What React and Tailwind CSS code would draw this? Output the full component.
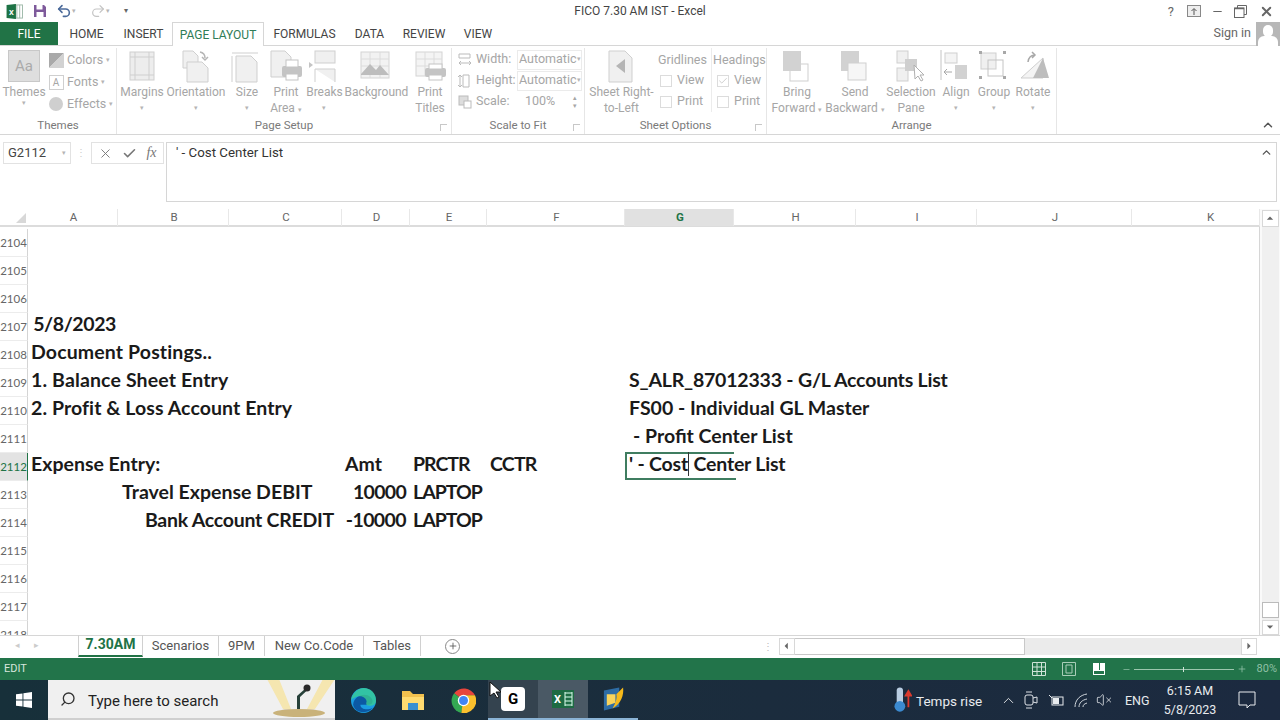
import { ChevronUp, Search, VolumeX, Plus, Minus, X, Check, Undo2, Redo2 } from 'lucide-react'

const GRID = 'grid grid-cols-[28px_90px_111px_113px_68px_77px_138px_109px_122px_121px_155px_128px]'
const COLS = ['A', 'B', 'C', 'D', 'E', 'F', 'G', 'H', 'I', 'J', 'K']

const rows = [
  { n: 2104 }, { n: 2105 }, { n: 2106 },
  { n: 2107, cells: { A: ['5/8/2023', 'end', 'pr-[2px] tracking-[-0.4px]'] } },
  { n: 2108, cells: { A: ['Document Postings..', 'start', 'pl-[3px] tracking-[0.13px]'] } },
  { n: 2109, cells: { A: ['1. Balance Sheet Entry', 'start', 'pl-[3px] tracking-[0.14px]'], G: ['S_ALR_87012333 - G/L Accounts List', 'start', 'pl-[4px] tracking-[-0.2px]'] } },
  { n: 2110, cells: { A: ['2. Profit & Loss Account Entry', 'start', 'pl-[3px] tracking-[0.08px]'], G: ['FS00 - Individual GL Master', 'start', 'pl-[4px]'] } },
  { n: 2111, cells: { G: ['- Profit Center List', 'start', 'pl-[8px]'] } },
  { n: 2112, active: true, cells: { A: ['Expense Entry:', 'start', 'pl-[3px]'], D: ['Amt', 'start', 'pl-[3px]'], E: ['PRCTR', 'start', 'pl-[3px] tracking-[-1px]'], F: ['CCTR', 'start', 'pl-[3px] tracking-[-0.8px]'] } },
  { n: 2113, cells: { B: ['Travel Expense DEBIT', 'start', 'pl-[4px]'], D: ['10000', 'end', 'pr-[4px] tracking-[-0.7px]'], E: ['LAPTOP', 'start', 'pl-[3px] tracking-[-1px]'] } },
  { n: 2114, cells: { C: ['Bank Account CREDIT', 'end', 'pr-[8px] tracking-[-0.25px]'], D: ['-10000', 'end', 'pr-[4px] tracking-[-0.6px]'], E: ['LAPTOP', 'start', 'pl-[3px] tracking-[-1px]'] } },
  { n: 2115 }, { n: 2116 }, { n: 2117 }, { n: 2118 },
]

const Caret = () => <span className="text-[7px] leading-none text-[#b5b5b5]">▾</span>

const ribbonIcons = {
  margins: <><rect x="4" y="2" width="24" height="28" fill="#ededed" stroke="#cfcfcf" /><path d="M4 7h24M4 25h24M9 2v28M23 2v28" stroke="#cfcfcf" /></>,
  orientation: <><path d="M3 1h10l5 5v12H3z" fill="#f0f0f0" stroke="#cfcfcf" /><path d="M7 12h15l6 6v14H7z" fill="#f0f0f0" stroke="#cfcfcf" /><path d="M20 2q5 1 5 6m-3-1 3 3 3-3" fill="none" stroke="#b5b5b5" strokeWidth="1.5" /></>,
  size: <><path d="M1 3h26M1 6v26M5 6h15l6 6v20H5z" fill="#f0f0f0" stroke="#cfcfcf" /></>,
  print: <><path d="M1 1h14l6 6v20H1z" fill="#f0f0f0" stroke="#cfcfcf" /><rect x="12" y="16" width="20" height="11" rx="2" fill="#c4c4c4" /><rect x="16" y="10" width="12" height="7" fill="#fff" stroke="#c4c4c4" /><rect x="16" y="24" width="12" height="6" fill="#fff" stroke="#c4c4c4" /></>,
  breaks: <><rect x="7" y="1" width="20" height="12" fill="#f0f0f0" stroke="#cfcfcf" /><path d="M7 19h20v13M7 19v13" fill="#f0f0f0" stroke="#cfcfcf" /><path d="m1 12 4 3-4 3z" fill="#c4c4c4" /></>,
  background: <><rect x="1" y="2" width="28" height="26" fill="#f2f2f2" stroke="#d4d4d4" /><path d="M1 9h28M1 16h28M10 2v26M20 2v26" stroke="#dcdcdc" /><path d="m1 24 9-10 6 6 4-5 9 10H1z" fill="#bdbdbd" /></>,
  titles: <><rect x="2" y="2" width="26" height="24" fill="#f4f4f4" stroke="#d4d4d4" /><path d="M2 9h26M2 16h26M11 2v24M20 2v24" stroke="#dcdcdc" /><rect x="11" y="18" width="21" height="9" rx="2" fill="#c4c4c4" /><rect x="15" y="14" width="13" height="5" fill="#fff" stroke="#c4c4c4" /><rect x="15" y="25" width="13" height="5" fill="#fff" stroke="#c4c4c4" /></>,
  rtl: <><path d="M4 1h16l7 7v24H4z" fill="#f0f0f0" stroke="#cfcfcf" /><path d="m20 9v14l-9-7z" fill="#b5b5b5" /></>,
  forward: <><rect x="9" y="14" width="18" height="17" fill="#fff" stroke="#cfcfcf" /><rect x="2" y="1" width="18" height="20" fill="#d2d2d2" /></>,
  backward: <><rect x="2" y="1" width="18" height="20" fill="#d2d2d2" /><rect x="9" y="13" width="18" height="17" fill="#f6f6f6" stroke="#cfcfcf" /></>,
  selection: <><rect x="2" y="1" width="11" height="12" fill="#f0f0f0" stroke="#cfcfcf" /><rect x="2" y="18" width="11" height="13" fill="#f0f0f0" stroke="#cfcfcf" /><rect x="10" y="9" width="12" height="12" fill="#cfcfcf" /><path d="m19 15 1 14 3-3 3 5 2-1-3-5h4z" fill="#fff" stroke="#b0b0b0" /></>,
  align: <><path d="M1 0v30" stroke="#c4c4c4" /><rect x="5" y="3" width="12" height="10" fill="#f4f4f4" stroke="#cfcfcf" /><rect x="15" y="15" width="12" height="14" fill="#d2d2d2" /><path d="M12 22H4m3-3-3 3 3 3" stroke="#a8a8a8" fill="none" /></>,
  group: <><rect x="3" y="3" width="15" height="16" fill="#f0f0f0" stroke="#cfcfcf" /><rect x="10" y="10" width="15" height="16" fill="none" stroke="#c4c4c4" /><path d="M1 1h3v3H1zM25 1h3v3h-3zM1 26h3v3H1zM25 26h3v3h-3z" fill="#a8a8a8" /></>,
  rotate: <><path d="M26 8v20H4z" fill="#f4f4f4" stroke="#cfcfcf" /><path d="M16 28 26 8l6 20z" fill="#bdbdbd" /><path d="M11 12q1-7 7-7m-3-3 3 3-3 3" fill="none" stroke="#a8a8a8" strokeWidth="1.5" /></>,
}

function RibbonBtn({ w, icon, lines, caret, caretInline }) {
  return (
    <div className={`${w} flex flex-col items-center shrink-0`}>
      <svg viewBox="0 0 33 33" className="w-[33px] h-[33px] mt-[2px] mb-[1px] shrink-0">{ribbonIcons[icon]}</svg>
      <div className="text-center text-[12px] leading-[16px] text-[#a6a6a6] whitespace-nowrap">
        {lines.map((l, i) => (
          <div key={l}>{l}{caretInline && i === lines.length - 1 ? <> <Caret /></> : null}</div>
        ))}
        {caret && <div className="h-[12px] leading-[12px]"><Caret /></div>}
      </div>
    </div>
  )
}

function Group({ label, w, launcher, children }) {
  return (
    <div className={`${w} h-[86px] shrink-0 flex flex-col border-r border-[#e6e6e6] relative`}>
      <div className="flex-1 flex min-h-0">{children}</div>
      <div className="h-[18px] text-center text-[11.5px] leading-[18px] text-[#7a7a7a]">{label}</div>
      {launcher && <span className="absolute right-[4px] bottom-[3px] w-[7px] h-[7px] border-l border-t border-[#c8c8c8]" />}
    </div>
  )
}

function ThemeRow({ swatch, label }) {
  return (
    <div className="h-[22px] flex items-center gap-[3px] text-[12.5px] text-[#a6a6a6]">
      <span className="w-[16px] h-[16px] flex items-center justify-center text-[10px]">{swatch}</span>
      {label} <Caret />
    </div>
  )
}

function ScaleRow({ icon, label, value, spin }) {
  return (
    <div className="h-[21px] flex items-center text-[12.5px] text-[#a6a6a6]">
      <svg viewBox="0 0 14 14" className="w-[14px] h-[14px] mr-[4px] shrink-0">{icon}</svg>
      <span className="w-[41px]">{label}</span>
      <span className={`w-[65px] h-[20px] flex items-center justify-between px-[1px] overflow-hidden ${spin ? 'pl-[8px]' : 'border border-[#ebebeb]'}`}>
        {value} {spin ? <span className="text-[7px] leading-[8px] flex flex-col pr-[4px]"><span>▴</span><span>▾</span></span> : <Caret />}
      </span>
    </div>
  )
}

function Box({ checked, label }) {
  return (
    <div className="h-[21px] flex items-center gap-[5px] text-[12.5px] text-[#a6a6a6]">
      <span className="w-[12px] h-[12px] border border-[#dcdcdc] flex items-center justify-center">
        {checked && <Check size={10} strokeWidth={1.5} className="text-[#b0b0b0]" />}
      </span>
      {label}
    </div>
  )
}

function Cell({ spec }) {
  if (!spec) return <div />
  const [text, align, pad] = spec
  return (
    <div className={`flex min-w-0 items-center pb-[6px] whitespace-nowrap ${align === 'end' ? 'justify-end' : 'justify-start'} ${pad}`}>
      <span>{text}</span>
    </div>
  )
}

function EditCell() {
  return (
    <div className="flex min-w-0 items-center h-[28px] -mt-px pb-[4px] pl-[2px] tracking-[-0.2px] whitespace-nowrap border-l-2 border-y-2 border-[#3f7d60] relative">
      <span className="border-r border-[#333]">' - Cost</span>
      <span>&nbsp;Center List</span>
      <span className="absolute -right-[2px] -bottom-[2px] w-[3px] h-[2px] bg-[#3f7d60]" />
    </div>
  )
}

function SheetRow({ row }) {
  const cells = row.cells || {}
  return (
    <div className={`${GRID} grid-rows-[28px] h-[28px] leading-[24px]`}>
      <div className={`flex items-center justify-center text-[11.5px] font-normal border-b border-[#ececec] border-r ${row.active ? 'bg-[#e3e3e3] text-[#217346] font-bold border-r-[#217346]' : 'text-[#666] border-r-[#d4d4d4]'}`}>
        {row.n}
      </div>
      {COLS.map(c => (row.active && c === 'G' ? <EditCell key={c} /> : <Cell key={c} spec={cells[c]} />))}
    </div>
  )
}

function ArrowBtn({ dir, className = '' }) {
  const d = { up: 'M1 6l4-4 4 4z', down: 'M1 2l4 4 4-4z', left: 'M6 1 2 5l4 4z', right: 'M3 1l4 4-4 4z' }[dir]
  return (
    <div className={`flex items-center justify-center bg-white border border-[#d8d8d8] ${className}`}>
      <svg viewBox="0 0 10 10" className="w-[8px] h-[8px]"><path d={d} fill="#666" /></svg>
    </div>
  )
}

function TaskSlot({ children, className = '' }) {
  return <div className={`w-[50px] h-[40px] flex items-center justify-center shrink-0 ${className}`}>{children}</div>
}

export default function App() {
  return (
    <div className="w-[1280px] h-[720px] overflow-hidden bg-white flex flex-col font-['Roboto',sans-serif] text-[#444]">
      {/* title bar */}
      <div className="h-[22px] shrink-0 grid grid-cols-[1fr_auto_1fr] items-center">
        <div className="flex items-center pl-[6px]">
          <svg viewBox="0 0 18 16" className="w-[18px] h-[15px]">
            <rect x="8" y="1" width="9" height="14" fill="#fff" stroke="#9db8a8" />
            <path d="M11 1v14M14 1v14" stroke="#9db8a8" />
            <path d="M0 1 10 0v16L0 15z" fill="#1d7245" />
            <text x="2.5" y="11.5" fontSize="8" fontWeight="700" fill="#fff">X</text>
          </svg>
          <svg viewBox="0 0 14 14" className="w-[14px] h-[14px] ml-[9px]">
            <path d="M1 1h10l2 2v10H1z" fill="#7e5a9b" />
            <rect x="3.5" y="1" width="6" height="4.5" fill="#fff" />
            <rect x="3.5" y="8" width="7" height="5" fill="#fff" />
          </svg>
          <Undo2 size={16} strokeWidth={2.4} className="ml-[9px] text-[#4b6a9a]" />
          <Caret />
          <Redo2 size={16} strokeWidth={1.8} className="ml-[14px] text-[#c4c4c4]" />
          <Caret />
          <span className="ml-[14px] text-[8px] leading-none text-[#666]">▾</span>
        </div>
        <div className="text-[12px] text-[#444]">FICO 7.30 AM IST - Excel</div>
        <div className="flex items-center justify-end pr-[6px] text-[#666]">
          <span className="text-[13px] leading-none mr-[13px]">?</span>
          <svg viewBox="0 0 14 12" className="w-[14px] h-[12px] mr-[10px]">
            <rect x=".5" y=".5" width="13" height="11" fill="#eee" stroke="#888" />
            <path d="M7 10V4M4.5 6 7 3.5 9.500 6" stroke="#555" fill="none" />
          </svg>
          <Minus size={13} strokeWidth={2} className="mr-[10px]" />
          <svg viewBox="0 0 13 13" className="w-[13px] h-[13px] mr-[12px]">
            <path d="M3.500 3V.5h9v9H10" fill="none" stroke="#666" />
            <rect x=".5" y="3" width="9.500" height="9.500" fill="#fff" stroke="#666" />
            <path d="M.5 3.500H10" stroke="#666" strokeWidth="1.500" />
          </svg>
          <X size={15} strokeWidth={3} />
        </div>
      </div>

      {/* ribbon tabs */}
      <div className="h-[24px] shrink-0 flex items-stretch text-[12px] border-b border-[#d6d6d6] relative">
        <div className="w-[58px] bg-[#217346] text-white flex items-center justify-center">FILE</div>
        <div className="w-[57px] flex items-center justify-center">HOME</div>
        <div className="w-[57px] flex items-center justify-center">INSERT</div>
        <div className="w-[92px] h-[24px] flex items-center justify-center text-[#2f7c57] bg-white border border-b-0 border-[#d6d6d6]">PAGE LAYOUT</div>
        <div className="w-[81px] flex items-center justify-center">FORMULAS</div>
        <div className="w-[49px] flex items-center justify-center">DATA</div>
        <div className="w-[60px] flex items-center justify-center">REVIEW</div>
        <div className="w-[48px] flex items-center justify-center">VIEW</div>
        <div className="ml-auto flex items-center gap-[5px] text-[12.5px] text-[#666]">
          Sign in
          <div className="w-[24px] h-[24px] bg-[#b7b7b7] flex flex-col items-center overflow-hidden">
            <span className="w-[10px] h-[12px] mt-[3px] shrink-0 rounded-full bg-white" />
            <span className="w-[20px] h-[12px] -mt-[1px] shrink-0 rounded-t-[6px] bg-white" />
          </div>
        </div>
      </div>

      {/* ribbon */}
      <div className="h-[89px] shrink-0 flex pt-[2px] border-b border-[#d6d6d6]">
        <Group label="Themes" w="w-[117px]">
          <div className="w-[48px] flex flex-col items-center">
            <div className="w-[32px] h-[32px] mt-[2px] mb-[2px] shrink-0 bg-[#dedede] border border-[#c8c8c8] flex items-center justify-center text-[15px] text-[#aaa]">Aa</div>
            <div className="text-[12px] leading-[16px] text-[#a6a6a6]">Themes</div>
            <Caret />
          </div>
          <div className="flex flex-col pt-[1px]">
            <ThemeRow label="Colors" swatch={<span className="w-[15px] h-[15px] bg-[linear-gradient(135deg,#a9a9a9_50%,#d2d2d2_50%)]" />} />
            <ThemeRow label="Fonts" swatch={<span className="w-[15px] h-[15px] border border-[#cfcfcf] flex items-center justify-center">A</span>} />
            <ThemeRow label="Effects" swatch={<span className="w-[14px] h-[14px] rounded-full bg-[#cfcfcf]" />} />
          </div>
        </Group>
        <Group label="Page Setup" w="w-[335px]" launcher>
          <div className="w-[3px]" />
          <RibbonBtn w="w-[46px]" icon="margins" lines={['Margins']} caret />
          <RibbonBtn w="w-[62px]" icon="orientation" lines={['Orientation']} caret />
          <RibbonBtn w="w-[40px]" icon="size" lines={['Size']} caret />
          <RibbonBtn w="w-[38px]" icon="print" lines={['Print', 'Area']} caretInline />
          <RibbonBtn w="w-[39px]" icon="breaks" lines={['Breaks']} caret />
          <RibbonBtn w="w-[65px]" icon="background" lines={['Background']} />
          <RibbonBtn w="w-[42px]" icon="titles" lines={['Print', 'Titles']} />
        </Group>
        <Group label="Scale to Fit" w="w-[133px]" launcher>
          <div className="flex flex-col pl-[6px] pt-[1px]">
            <ScaleRow label="Width:" value="Automatic" icon={<path d="M1 1h11v4H1zM1 10h12M3 8l-2 2 2 2M11 8l2 2-2 2" fill="none" stroke="#bbb" />} />
            <ScaleRow label="Height:" value="Automatic" icon={<path d="M5 1h6v12H5zM2 1v12M0 3l2-2 2 2M0 11l2 2 2-2" fill="none" stroke="#bbb" />} />
            <ScaleRow label="Scale:" value="100%" spin icon={<><rect x="1" y="1" width="9" height="9" fill="#ddd" stroke="#bbb" /><rect x="6" y="6" width="7" height="7" fill="#fff" stroke="#bbb" /></>} />
          </div>
        </Group>
        <Group label="Sheet Options" w="w-[182px]" launcher>
          <RibbonBtn w="w-[73px]" icon="rtl" lines={['Sheet Right-', 'to-Left']} />
          <div className="w-[53px] flex flex-col pt-[3px] text-[12.5px] text-[#a6a6a6]">
            <div className="h-[19px]">Gridlines</div>
            <div className="pl-[2px]"><Box label="View" /><Box label="Print" /></div>
          </div>
          <div className="w-[55px] h-[64px] flex flex-col pt-[3px] text-[12.5px] text-[#a6a6a6] border-l border-[#ececec]">
            <div className="h-[19px] pl-[1px]">Headings</div>
            <div className="pl-[5px]"><Box checked label="View" /><Box label="Print" /></div>
          </div>
        </Group>
        <Group label="Arrange" w="w-[290px]">
          <div className="w-[1px]" />
          <RibbonBtn w="w-[58px]" icon="forward" lines={['Bring', 'Forward']} caretInline />
          <RibbonBtn w="w-[58px]" icon="backward" lines={['Send', 'Backward']} caretInline />
          <RibbonBtn w="w-[54px]" icon="selection" lines={['Selection', 'Pane']} />
          <RibbonBtn w="w-[36px]" icon="align" lines={['Align']} caret />
          <RibbonBtn w="w-[40px]" icon="group" lines={['Group']} caret />
          <RibbonBtn w="w-[38px]" icon="rotate" lines={['Rotate']} caret />
        </Group>
        <div className="flex-1 flex items-end justify-end pr-[5px] pb-[2px]">
          <ChevronUp size={14} strokeWidth={2.5} className="text-[#555]" />
        </div>
      </div>

      {/* formula bar */}
      <div className="h-[74px] shrink-0 flex items-start pt-[7px] pl-[3px] pr-[3px]">
        <div className="w-[68px] h-[22px] border border-[#e2e2e2] flex items-center justify-between px-[4px] text-[13px]">
          G2112 <Caret />
        </div>
        <div className="w-[20px] text-center text-[#ccc] text-[10px] leading-[22px]">⋮</div>
        <div className="w-[73px] h-[22px] border border-[#e2e2e2] flex items-center justify-around px-[2px] text-[#777]">
          <X size={15} strokeWidth={1.5} />
          <Check size={15} strokeWidth={2.5} />
          <span className="font-['Liberation_Serif',serif] italic text-[14px] leading-none">fx</span>
        </div>
        <div className="w-[2px] shrink-0" />
        <div className="flex-1 h-[60px] border border-[#d6d6d6] flex justify-between pl-[9px] pr-[3px] text-[13.3px] text-[#333]">
          <span>' - Cost Center List</span>
          <ChevronUp size={13} strokeWidth={2.5} className="text-[#555] mt-[3px]" />
        </div>
      </div>

      {/* sheet */}
      <div className="flex-1 min-h-0 flex">
        <div className="w-[1260px] flex flex-col">
          <div className={`${GRID} h-[18px] shrink-0 text-[11.5px] text-[#666] border-b-2 border-[#dcdcdc]`}>
            <div className="flex items-center justify-end pr-[2px]">
              <svg viewBox="0 0 10 10" className="w-[10px] h-[10px]"><path d="M10 0v10H0z" fill="#d8d8d8" /></svg>
            </div>
            {COLS.map(c => (
              <div key={c} className={`flex items-center justify-center border-r border-[#e8e8e8] ${c === 'K' ? 'pl-[30px]' : 'pl-[2px]'} ${c === 'G' ? 'bg-[#e1e1e1] text-[#217346] font-bold' : ''}`}>{c}</div>
            ))}
          </div>
          <div className="flex-1 min-h-0 pt-[2px] overflow-hidden border-r border-[#d6d6d6] font-['Lato',sans-serif] font-bold text-[19.5px] text-[#1a1a1a]">
            {rows.map(r => <SheetRow key={r.n} row={r} />)}
          </div>
        </div>
        <div className="flex-1 flex flex-col items-center pt-[1px] bg-[#fafafa]">
          <ArrowBtn dir="up" className="w-[17px] h-[17px] shrink-0" />
          <div className="flex-1 w-[17px] flex flex-col justify-end bg-[#f0f0f0]">
            <div className="h-[16px] mb-[2px] bg-white border border-[#bbb]" />
          </div>
          <ArrowBtn dir="down" className="w-[17px] h-[15px] shrink-0" />
        </div>
      </div>

      {/* sheet tabs */}
      <div className="h-[23px] shrink-0 flex items-center pb-[2px] border-t border-[#d6d6d6] text-[13px] text-[#555] bg-white">
        <div className="w-[78px] shrink-0 flex items-center gap-[14px] pl-[15px] text-[#ccc] text-[9px]"><span>◂</span><span>▸</span></div>
        <div className="w-[65px] shrink-0 h-[22px] -mt-px flex items-center justify-center font-bold text-[14px] text-[#217346] border-x border-[#d0d0d0] border-b-2 border-b-[#217346]">7.30AM</div>
        <div className="w-[76px] shrink-0 h-[20px] flex items-center justify-center border-r border-[#d0d0d0]">Scenarios</div>
        <div className="w-[46px] shrink-0 h-[20px] flex items-center justify-center border-r border-[#d0d0d0]">9PM</div>
        <div className="w-[99px] shrink-0 h-[20px] flex items-center justify-center border-r border-[#d0d0d0]">New Co.Code</div>
        <div className="w-[57px] shrink-0 h-[20px] flex items-center justify-center border-r border-[#d0d0d0]">Tables</div>
        <div className="ml-[24px] shrink-0 w-[15px] h-[15px] rounded-full border border-[#888] flex items-center justify-center"><Plus size={10} /></div>
        <div className="ml-[303px] shrink-0 w-[3px] text-[#bbb] text-[10px]">⋮</div>
        <div className="ml-[13px] shrink-0 w-[478px] h-[17px] flex bg-[#ebebeb]">
          <ArrowBtn dir="left" className="w-[16px] h-[17px]" />
          <div className="w-[230px] bg-white border-y border-r border-[#c8c8c8]" />
          <ArrowBtn dir="right" className="w-[16px] h-[17px] ml-auto" />
        </div>
      </div>

      {/* status bar */}
      <div className="h-[22px] shrink-0 bg-[#22744a] flex items-center pl-[4px] pr-[3px] text-[11px] text-[#d7e6dd]">
        EDIT
        <div className="ml-auto flex items-center text-[#8fc0a5]">
          <svg viewBox="0 0 14 14" className="w-[14px] h-[14px] mr-[16px]"><path d="M.5.5h13v13H.5zM.5 5h13M.5 9.500h13M5 .5v13M9.500.5v13" fill="none" stroke="#cfe3d7" /></svg>
          <svg viewBox="0 0 14 14" className="w-[14px] h-[14px] mr-[16px]"><path d="M.5.5h13v13H.5zM4 3h6v8H4z" fill="none" stroke="#a9cdb8" /></svg>
          <svg viewBox="0 0 14 14" className="w-[14px] h-[14px] mr-[16px]"><path d="M1 1h12v12H1z" fill="#fff" /><path d="M7 1h1v7H7z" fill="#22744a" /><path d="M2 9h10v3H2z" fill="#22744a" /></svg>
          <Minus size={9} strokeWidth={2} />
          <div className="w-[100px] h-[1px] mx-[3px] bg-[#9cc6ae] flex justify-center"><span className="w-[1px] h-[5px] -mt-[2px] bg-[#cfe3d7]" /></div>
          <Plus size={10} strokeWidth={2} />
          <span className="ml-[10px]">80%</span>
        </div>
      </div>

      {/* taskbar */}
      <div className="h-[40px] shrink-0 flex bg-[linear-gradient(90deg,#17303a,#1b2c3d_60%,#1c2a40)] text-[#e8ebee]">
        <div className="w-[48px] flex items-center justify-center">
          <svg viewBox="0 0 16 16" className="w-[16px] h-[16px]"><path d="M0 2.300 6.500 1.400v6.100H0zM7.400 1.300 16 0v7.500H7.400zM0 8.500h6.500v6.100L0 13.700zM7.400 8.500H16V16l-8.600-1.300z" fill="#fff" /></svg>
        </div>
        <div className="w-[287px] bg-[#f0f0f0] flex items-center text-[#222] border-b-2 border-[#cfcfcf] overflow-hidden">
          <Search size={16} className="ml-[12px] -scale-x-100 text-[#333]" />
          <span className="ml-[12px] mt-[4px] text-[15px]">Type here to search</span>
          <svg viewBox="0 0 72 40" className="w-[72px] h-[40px] ml-auto shrink-0">
            <path d="M4 0h12l12 30H20zM72 0H60L44 30h8z" fill="#f5e6b0" />
            <ellipse cx="36" cy="34" rx="26" ry="4" fill="#c9b27a" />
            <path d="M34 30V17l9-8 1.500 2-7.500 7v12z" fill="#27413a" />
            <circle cx="44" cy="9" r="3.500" fill="#2b2b2b" />
          </svg>
        </div>
        <div className="w-[3px]" />
        <TaskSlot>
          <svg viewBox="0 0 24 24" className="w-[25px] h-[25px]">
            <circle cx="12" cy="12" r="12" fill="#1b9de2" />
            <path d="M2 16C3 7 14 4 19 9c3 3 2 7-2 7H9c0 4 6 6 12 3-4 6-17 6-19-3z" fill="#0c59a4" />
            <path d="M0 12C1 4 8 0 12 0c7 0 12 5 12 12 0 4-3 5-6 5-3 0-4-1-3-4 0-3-4-6-8-5-3 1-6 2-7 4z" fill="#3bd08f" opacity=".75" />
          </svg>
        </TaskSlot>
        <TaskSlot>
          <svg viewBox="0 0 24 22" className="w-[24px] h-[22px]">
            <path d="M1 2h8l3 3h11v15H1z" fill="#f2c14e" />
            <rect x="1" y="8" width="22" height="13" fill="#ffdb70" />
            <rect x="7" y="14" width="10" height="7" fill="#3a8fd0" />
          </svg>
        </TaskSlot>
        <TaskSlot>
          <svg viewBox="0 0 24 24" className="w-[25px] h-[25px]">
            <path d="M12 12 3 5a12 12 0 0 1 20 2H12z" fill="#e8453c" />
            <path d="M12 12 3 5a12 12 0 0 0 7 19z" fill="#34a853" />
            <path d="M12 7h11a12 12 0 0 1-13 17z" fill="#fbc02d" />
            <circle cx="12" cy="12" r="5.500" fill="#fff" />
            <circle cx="12" cy="12" r="4.300" fill="#4285f4" />
          </svg>
        </TaskSlot>
        <TaskSlot className="bg-[#34434f] border-b-2 border-[#8bb4d6] relative">
          <div className="w-[24px] h-[24px] rounded-[4px] bg-white flex items-center justify-center text-[15px] font-bold text-black leading-none">G</div>
          {/* mouse pointer sitting on the taskbar */}
          <svg viewBox="0 0 12 18" className="absolute left-[1px] top-[1px] w-[12px] h-[18px]"><path d="M1 1v14l4-3 3 5 2-1-3-5h5z" fill="#fff" stroke="#111" /></svg>
        </TaskSlot>
        <TaskSlot className="bg-[#4a5965] border-b-2 border-[#8bb4d6]">
          <svg viewBox="0 0 24 20" className="w-[24px] h-[20px]">
            <rect x="1" y="1" width="22" height="18" fill="#1d6b43" />
            <text x="3" y="14" fontSize="11" fontWeight="700" fill="#fff">X</text>
            <path d="M14 4h7M14 8h7M14 12h7M14 16h7M14 3v14M21 3v14" stroke="#dfe" />
          </svg>
        </TaskSlot>
        <TaskSlot className="border-b-2 border-[#8bb4d6]">
          <svg viewBox="0 0 24 26" className="w-[23px] h-[26px]">
            <path d="M2 4 18 1v20L2 25z" fill="#2d6ca5" />
            <path d="M22 1c1 8-2 17-11 22 3-6 5-10 4-15z" fill="#f6b91a" />
            <path d="M5 8h9v9l-9 3z" fill="#f9d45c" />
          </svg>
        </TaskSlot>
        <div className="ml-auto flex items-center">
          <svg viewBox="0 0 20 30" className="w-[18px] h-[28px] mr-[4px]">
            <rect x="3" y="1" width="7" height="20" rx="3.500" fill="#b9cde2" />
            <circle cx="6.500" cy="22" r="6" fill="#3b8ad0" />
            <path d="M16 5v18M13 10l3-5 3 5z" stroke="#d93a2e" fill="#d93a2e" strokeWidth="2" />
          </svg>
          <span className="text-[13.5px] mt-[3px] w-[84px]">Temps rise</span>
          <ChevronUp size={17} strokeWidth={1.3} className="mr-[7px]" />
          <svg viewBox="0 0 14 18" className="w-[14px] h-[18px] mr-[10px]"><rect x="1" y="4" width="8" height="10" rx="2" fill="none" stroke="#dfe3e8" /><path d="M9 7l4-1v6l-4-1M2 1h6M2 17h6" fill="none" stroke="#dfe3e8" /></svg>
          <svg viewBox="0 0 16 12" className="w-[16px] h-[12px] mr-[9px]"><rect x="4" y="3" width="11" height="8" fill="none" stroke="#e8ebee" /><rect x="5" y="4" width="6" height="6" fill="#e8ebee" /><path d="M1 1l3 3" stroke="#e8ebee" /></svg>
          <svg viewBox="0 0 16 16" className="w-[16px] h-[16px] mr-[7px]"><path d="M2 15C2 8 7 3 14 2M6 15c0-4 3-7 8-8M10 15c0-2 1-3 4-4" fill="none" stroke="#cfd5db" /></svg>
          <VolumeX size={16} strokeWidth={1.2} />
          <span className="text-[12.5px] mt-[3px] ml-[13px] w-[24px]">ENG</span>
          <div className="ml-[14px] w-[54px] text-center text-[12.5px] leading-[19px]">
            <div>6:15 AM</div>
            <div>5/8/2023</div>
          </div>
          <svg viewBox="0 0 18 18" className="w-[18px] h-[18px] ml-[21px] mr-[24px]"><path d="M1 1h16v13h-5l-3 3v-3H1z" fill="none" stroke="#e8ebee" /></svg>
        </div>
      </div>
    </div>
  )
}
